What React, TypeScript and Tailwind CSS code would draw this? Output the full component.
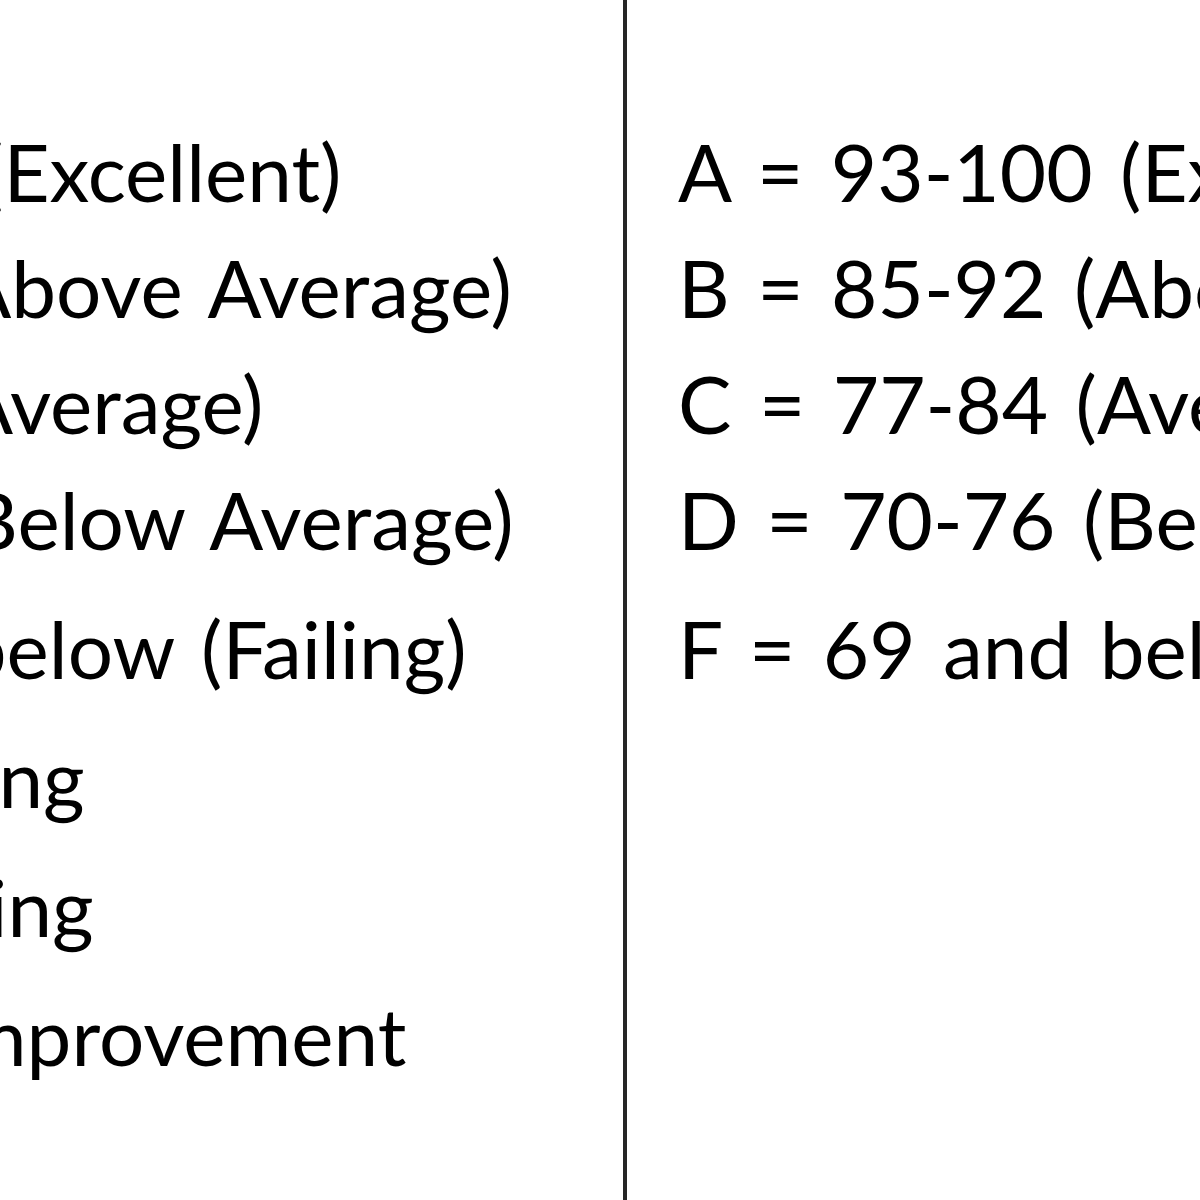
const rows = [
  { left: 'A = 93-100 (Excellent)', right: 'A = 93-100 (Excellent)' },
  { left: 'B = 85-92 (Above Average)', right: 'B = 85-92 (Above Average)' },
  { left: 'C = 77-84 (Average)', right: 'C = 77-84 (Average)' },
  { left: 'D = 70-76 (Below Average)', right: 'D = 70-76 (Below Average)' },
  { left: 'F = 69 and below (Failing)', right: 'F = 69 and below (Failing)', gap: true },
  { left: '3 = Succeeding', right: '', gap: true },
  { left: '2 = Progressing', right: '', gap: true },
  { left: '1 = Needs Improvement', right: '', gap: true },
]

export default function App() {
  return (
    <div className="w-[1200px] h-[1200px] overflow-hidden bg-white text-black font-['Lato',sans-serif] text-[80px] leading-[116px] [word-spacing:7px]">
      <div className="flex h-full -ml-[460px]">
        {/* left cell, clipped by the frame */}
        <div className="w-[1083px] shrink-0 pt-[113px] whitespace-nowrap">
          {rows.map((r) => (
            <div key={r.left} className={r.gap ? 'mt-[13px]' : ''}>
              {r.left}
            </div>
          ))}
        </div>
        <div className="w-[4px] shrink-0 bg-[#262626]" />
        <div className="shrink-0 pl-[51px] pt-[113px] whitespace-nowrap">
          {rows.map((r) =>
            r.right ? (
              <div key={r.left} className={r.gap ? 'mt-[13px]' : ''}>
                {r.right}
              </div>
            ) : null
          )}
        </div>
      </div>
    </div>
  )
}
